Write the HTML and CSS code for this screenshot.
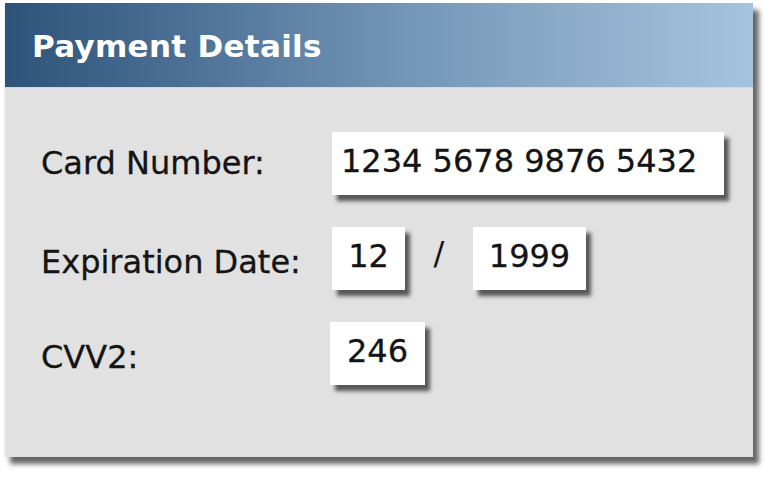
FILE: index.html
```html
<!DOCTYPE html>
<html lang="en">
<head>
<meta charset="UTF-8" />
<meta name="viewport" content="width=device-width, initial-scale=1.0"/>
<title>Payment Details</title>
<link rel="stylesheet" href="styles.css">
</head>
<body>

<div class="panel">
  <div class="panel-head">
    <h2>Payment Details</h2>
  </div>

  <div class="form">
    <div class="label">Card Number:</div>
    <div class="fields">
      <span class="field field-card">1234 5678 9876 5432</span>
    </div>

    <div class="label label-low">Expiration Date:</div>
    <div class="fields">
      <span class="field field-month">12</span>
      <span class="slash">/</span>
      <span class="field field-year">1999</span>
    </div>

    <div class="label label-low">CVV2:</div>
    <div class="fields">
      <span class="field field-cvv">246</span>
    </div>
  </div>
</div>

</body>
</html>
```

FILE: styles.css
```css
* { margin: 0; padding: 0; box-sizing: border-box; }
html, body {
  width: 100%;
  height: 100%;
  background: #fff;
}
body {
  font-family: "DejaVu Sans", Verdana, sans-serif;
  color: #141414;
  padding: 3px 0 0 4px;
}
.panel {
  width: 749px;
  height: 454px;
  background: #e1e1e1;
  border-left: 1px solid #f2f2f2;
  box-shadow: 6px 7px 5px rgba(0,0,0,0.6);
}
.panel-head {
  height: 85px;
  display: flex;
  align-items: center;
  padding-left: 27px;
  background: linear-gradient(to right, #2d5378 0%, #4a6e93 22%, #7194b5 52%, #90aecb 78%, #a5c2de 100%);
  border-bottom: 1px solid #cfd9e4;
}
.panel-head h2 {
  font-size: 31px;
  font-weight: bold;
  color: #fff;
  letter-spacing: 0.3px;
  padding-top: 2px;
}
.form {
  display: grid;
  grid-template-columns: 291px auto;
  grid-auto-rows: 63px;
  row-gap: 32px;
  padding: 44px 0 0 36px;
}
.label {
  font-size: 32px;
  line-height: 63px;
  -webkit-text-stroke: 0.3px #141414;
}
.label-low { padding-top: 4px; }
.fields {
  display: flex;
  align-items: flex-start;
}
.field {
  display: block;
  height: 63px;
  line-height: 58px;
  font-size: 32px;
  background: #fff;
  text-align: center;
  -webkit-text-stroke: 0.3px #141414;
  box-shadow: 5px 6px 4px rgba(0,0,0,0.62);
}
.field-card {
  width: 392px;
  text-align: left;
  padding-left: 9px;
}
.field-month { width: 73px; }
.field-year { width: 113px; }
.field-cvv { width: 95px; margin-left: -2px; }
.slash {
  width: 68px;
  text-align: center;
  font-size: 32px;
  line-height: 52px;
}
```
